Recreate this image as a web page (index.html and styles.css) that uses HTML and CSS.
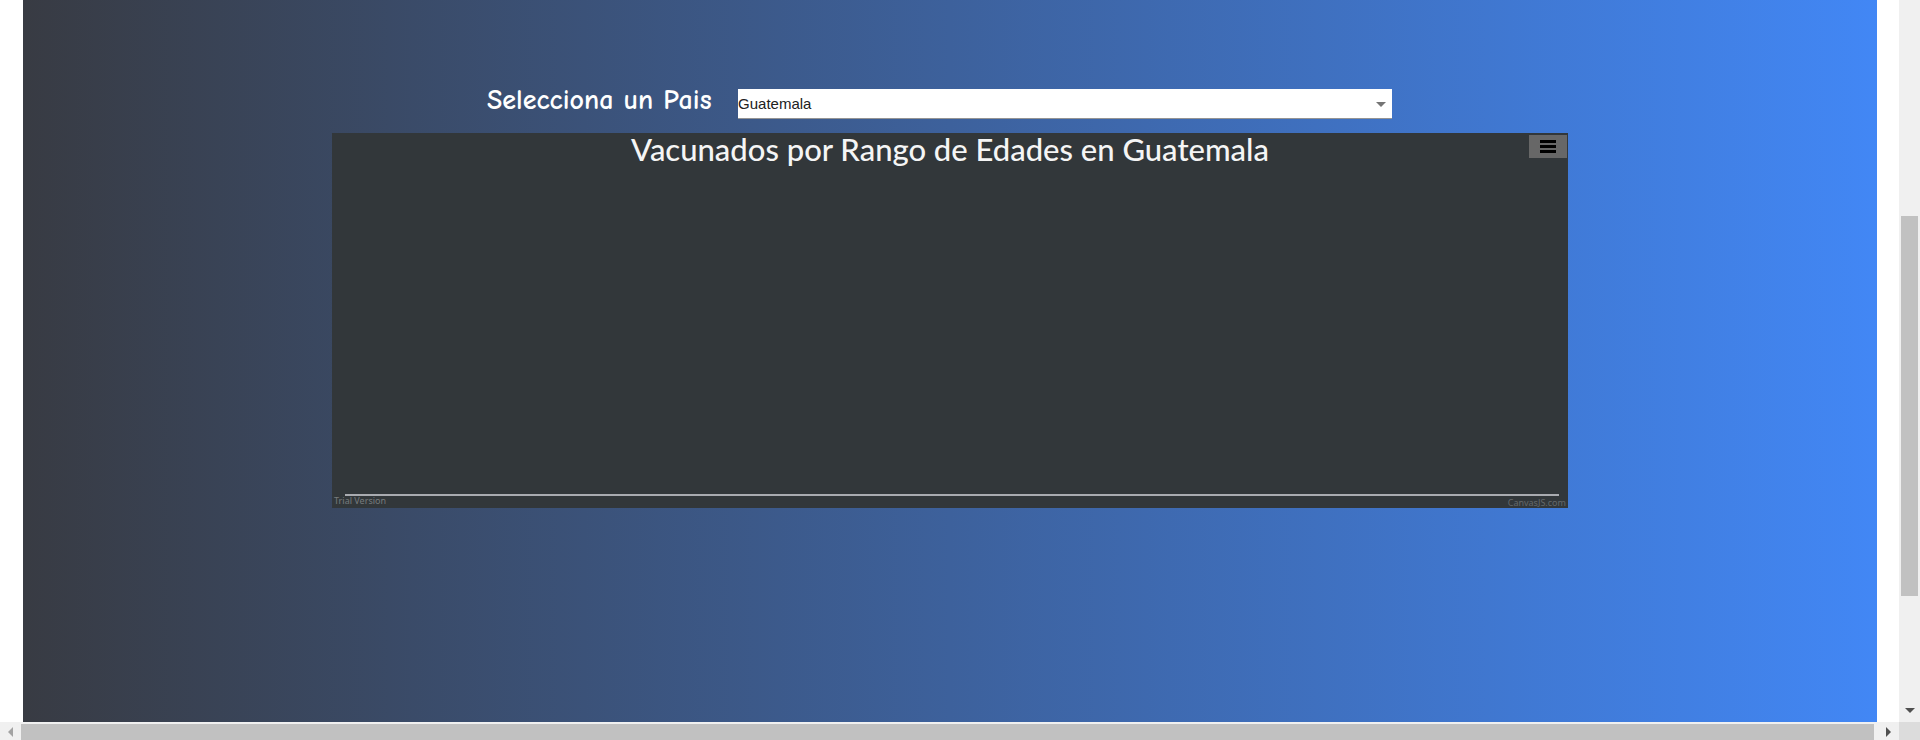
FILE: index.html
```html
<!DOCTYPE html>
<html lang="es">
<head>
<meta charset="utf-8">
<title>Vacunados por Rango de Edades</title>
<link rel="stylesheet" href="styles.css">
</head>
<body>
<div class="frame">
  <main class="page">
    <section class="panel">
      <div class="content">
        <div class="picker">
          <label class="picker-label" for="pais">Selecciona un Pais</label>
          <div class="picker-field">
            <select class="picker-select" id="pais"><option>Guatemala</option></select>
            <svg class="picker-arrow" viewBox="0 0 10 5" aria-hidden="true"><path d="M0 0h10L5 5z"/></svg>
          </div>
        </div>
        <div class="chart">
          <h1 class="chart-title">Vacunados por Rango de Edades en Guatemala</h1>
          <button class="chart-menu" type="button" aria-label="Más opciones">
            <svg class="chart-menu-icon" viewBox="0 0 16 14" aria-hidden="true"><path d="M0 0h16v3H0zM0 5h16v3H0zM0 10h16v3H0z"/></svg>
          </button>
          <div class="chart-plot"></div>
          <div class="chart-footer">
            <span class="chart-trial">Trial Version</span>
            <a class="chart-credit" href="#">CanvasJS.com</a>
          </div>
        </div>
      </div>
    </section>
  </main>
  <div class="bar bar-vertical">
    <div class="thumb thumb-vertical"></div>
    <svg class="arrow-down" viewBox="0 0 10 5" aria-hidden="true"><path d="M0 0h10L5 5z"/></svg>
  </div>
  <div class="bar bar-horizontal">
    <svg class="arrow-side arrow-muted" viewBox="0 0 5 10" aria-hidden="true"><path d="M5 0v10L0 5z"/></svg>
    <div class="thumb thumb-horizontal"></div>
    <svg class="arrow-side" viewBox="0 0 5 10" aria-hidden="true"><path d="M0 0v10l5-5z"/></svg>
  </div>
  <div class="corner"></div>
</div>
</body>
</html>
```
FILE: styles.css
```css
* {
  box-sizing: border-box;
}

body {
  margin: 0;
  background: #fff;
  font-family: "Liberation Sans", Arial, sans-serif;
}

.frame {
  display: grid;
  grid-template-columns: minmax(0, 1fr) 21px;
  grid-template-rows: minmax(0, 1fr) 18px;
  height: 100vh;
  overflow: hidden;
}

.page {
  display: flex;
  padding: 0 22px 0 23px;
}

.panel {
  flex: 1;
  padding-top: 84px;
  background: linear-gradient(to right, #383b43, #4287f5);
}

.content {
  width: 66.66%;
  margin: 0 auto;
}

.picker {
  display: flex;
  padding: 0 176px 0 155px;
  margin-bottom: 14px;
}

.picker-label {
  flex: 0 0 251px;
  color: #fff;
  font: 700 28px/32px "Comic Neue", "Comic Sans MS", "Open Sans", sans-serif;
  white-space: nowrap;
}

.picker-field {
  position: relative;
  flex: 1;
  height: 30px;
  margin-top: 5px;
}

.picker-select {
  display: block;
  width: 100%;
  height: 100%;
  padding: 0;
  border: 0;
  border-bottom: 1px solid #949494;
  border-radius: 0;
  appearance: none;
  background: #fff;
  color: #212121;
  font: 15px/18px "Liberation Sans", Arial, sans-serif;
}

.picker-arrow {
  position: absolute;
  top: 13px;
  right: 6px;
  width: 10px;
  fill: #757575;
  pointer-events: none;
}

.chart {
  position: relative;
  display: flex;
  flex-direction: column;
  background: #32373a;
}

.chart-title {
  margin: 0;
  color: #f5f5f5;
  font: 500 31px/32px Lato, "Trebuchet MS", sans-serif;
  text-align: center;
}

.chart-menu {
  position: absolute;
  top: 2px;
  right: 1px;
  display: grid;
  place-items: center;
  width: 38px;
  height: 23px;
  padding: 0;
  border: 0;
  background: #676767;
}

.chart-menu-icon {
  width: 16px;
  height: 14px;
}

.chart-plot {
  height: 331px;
  margin: 0 9px 0 13px;
  border-bottom: 2px solid #a9abb0;
}

.chart-footer {
  display: flex;
  justify-content: space-between;
  height: 12px;
  padding: 0 2px;
  color: #777b7d;
}

.chart-trial {
  font: 9px/10px "Noto Sans", sans-serif;
}

.chart-credit {
  padding-top: 2px;
  color: #65696b;
  font: 9px/10px "Noto Sans", sans-serif;
  text-decoration: none;
}

.bar {
  display: flex;
  background: #f0f0f0;
}

.bar-vertical {
  flex-direction: column;
  align-items: center;
  justify-content: space-between;
  padding: 216px 2px 9px;
}

.bar-horizontal {
  align-items: center;
  justify-content: space-between;
  gap: 8px;
  padding: 2px 8px 0;
}

.thumb {
  background: #c1c1c1;
}

.thumb-vertical {
  width: 100%;
  height: 76.5%;
}

.thumb-horizontal {
  flex: 1;
  align-self: stretch;
  margin-right: 4px;
}

.arrow-down {
  width: 10px;
  fill: #505050;
}

.arrow-side {
  width: 5px;
  fill: #505050;
}

.arrow-muted {
  fill: #a3a3a3;
}

.corner {
  background: #dcdcdc;
}
```
